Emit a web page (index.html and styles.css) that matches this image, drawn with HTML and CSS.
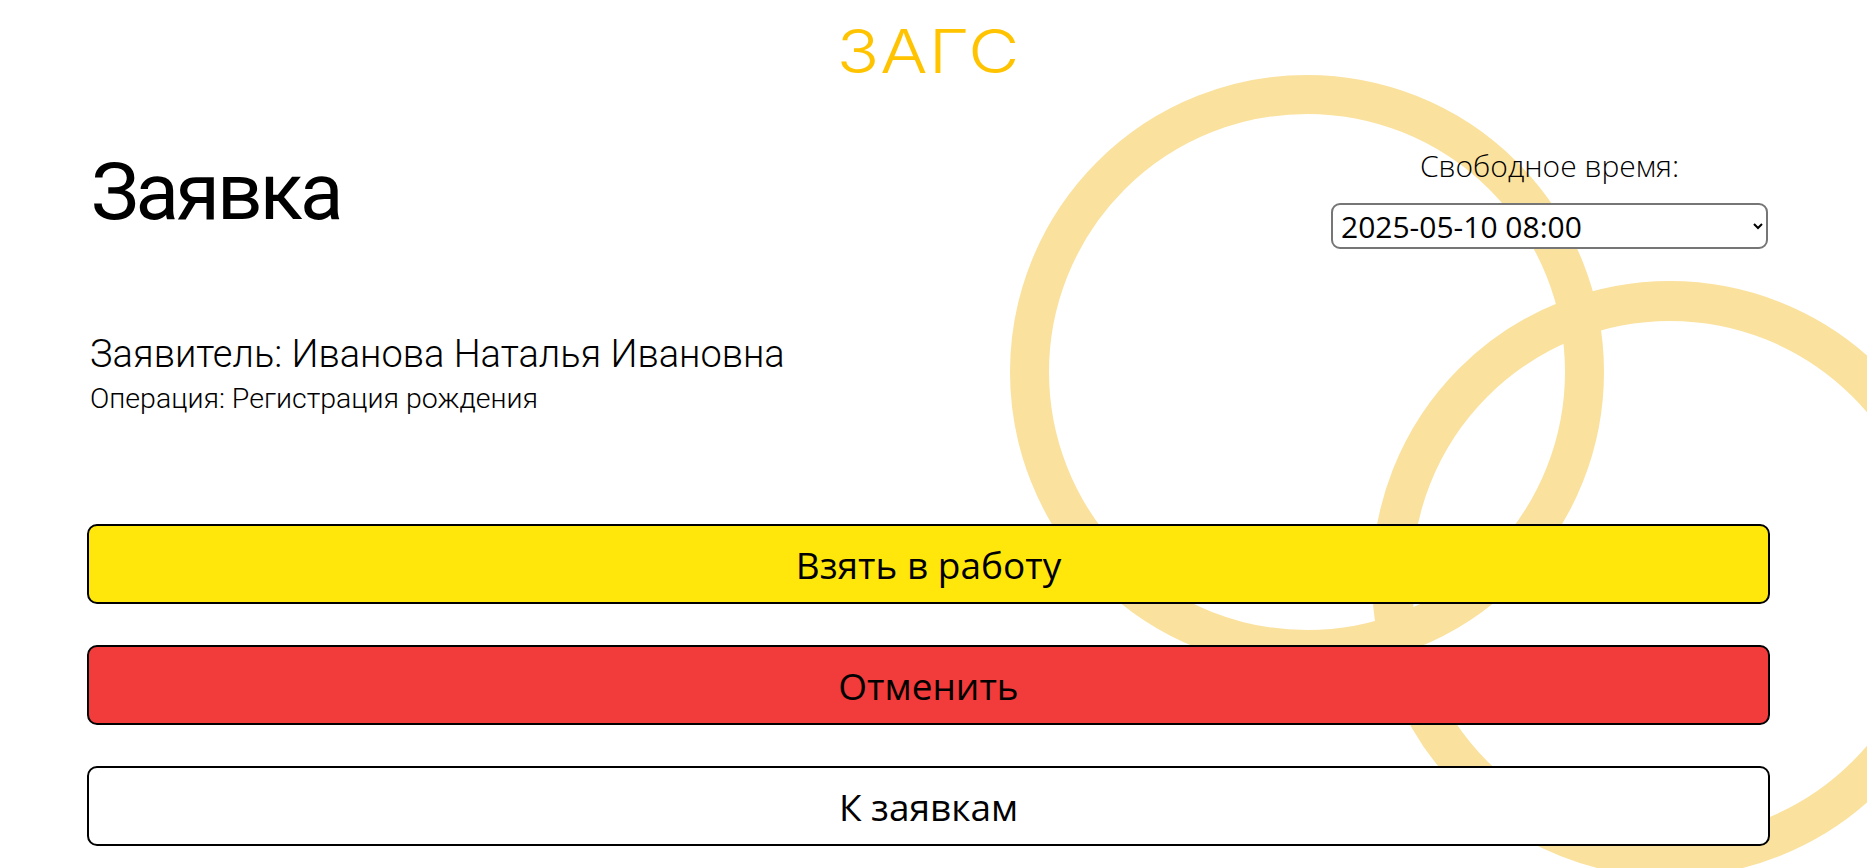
FILE: index.html
```html
<!DOCTYPE html>
<html lang="ru">
<head>
<meta charset="utf-8">
<title>Заявка</title>
<link rel="stylesheet" href="styles.css">
</head>
<body>
<div class="rings" aria-hidden="true">
  <div class="ring ring-one"></div>
  <div class="ring ring-two"></div>
</div>
<header class="header">
  <div class="logo">ЗАГС</div>
</header>
<main class="page">
  <section class="top-row">
    <h1 class="title">Заявка</h1>
    <div class="time-box">
      <label class="time-label" for="slot">Свободное время:</label>
      <select class="time-select" id="slot">
        <option>2025-05-10 08:00</option>
        <option>2025-05-10 09:00</option>
        <option>2025-05-10 10:00</option>
      </select>
    </div>
  </section>
  <section class="info">
    <div class="applicant">Заявитель: Иванова Наталья Ивановна</div>
    <div class="operation">Операция: Регистрация рождения</div>
  </section>
  <section class="actions">
    <button class="btn btn-take" type="button">Взять в работу</button>
    <button class="btn btn-cancel" type="button">Отменить</button>
    <button class="btn btn-back" type="button">К заявкам</button>
  </section>
</main>
</body>
</html>
```
FILE: styles.css
```css
html, body {
  margin: 0;
  padding: 0;
  background: #ffffff;
}
body {
  position: relative;
  width: 1867px;
  height: 868px;
  overflow: hidden;
  font-family: "Open Sans", "Liberation Sans", sans-serif;
  color: #000;
}
.rings {
  position: absolute;
  inset: 0;
  z-index: 0;
  pointer-events: none;
}
.ring {
  position: absolute;
  box-sizing: border-box;
  border-radius: 50%;
  border-style: solid;
  border-color: rgb(250, 225, 157);
}
.ring-one {
  left: 1010px;
  top: 75px;
  width: 594px;
  height: 594px;
  border-width: 39px;
}
.ring-two {
  left: 1372px;
  top: 281px;
  width: 596px;
  height: 596px;
  border-width: 40px;
}
.header {
  position: relative;
  z-index: 1;
  height: 100px;
  display: flex;
  justify-content: center;
}
.logo {
  font-family: "Inter", "Liberation Sans", sans-serif;
  font-weight: 300;
  font-size: 60px;
  line-height: 100px;
  padding-top: 1px;
  margin-right: 9px;
  color: #ffc300;
  letter-spacing: 1px;
  transform: scaleX(1.17);
}
.page {
  position: relative;
  z-index: 1;
  padding: 48px 97px 0 87px;
}
.top-row {
  display: flex;
  justify-content: space-between;
  align-items: flex-start;
}
.title {
  margin: 4px 0 0 4px;
  font-family: "Roboto", "Liberation Sans", sans-serif;
  font-weight: 400;
  font-size: 80px;
  line-height: 80px;
  letter-spacing: -3px;
}
.time-box {
  width: 437px;
  margin-right: 2px;
  display: flex;
  flex-direction: column;
  align-items: center;
  gap: 20px;
}
.time-label {
  font-weight: 300;
  font-size: 30px;
  line-height: 35px;
}
.time-select {
  width: 437px;
  height: 46px;
  box-sizing: border-box;
  font-family: "Open Sans", sans-serif;
  font-size: 30px;
  color: #000;
  background: #fff;
  border: 2px solid #767676;
  border-radius: 9px;
  padding: 0 0 0 4px;
}
.info {
  margin-top: 83px;
  padding-left: 3px;
  font-family: "Roboto", "Liberation Sans", sans-serif;
  font-weight: 300;
}
.applicant {
  font-size: 38px;
  line-height: 44px;
}
.operation {
  font-size: 28.5px;
  line-height: 34px;
  margin-top: 6px;
}
.actions {
  margin-top: 108px;
  display: flex;
  flex-direction: column;
  gap: 41px;
}
.btn {
  width: 100%;
  height: 80px;
  box-sizing: border-box;
  border: 2px solid #000;
  border-radius: 10px;
  font-family: "Open Sans", sans-serif;
  font-size: 37px;
  color: #000;
  cursor: pointer;
}
.btn-take { background: #ffe70b; }
.btn-cancel { background: #f23b3b; }
.btn-back { background: #ffffff; }
```
